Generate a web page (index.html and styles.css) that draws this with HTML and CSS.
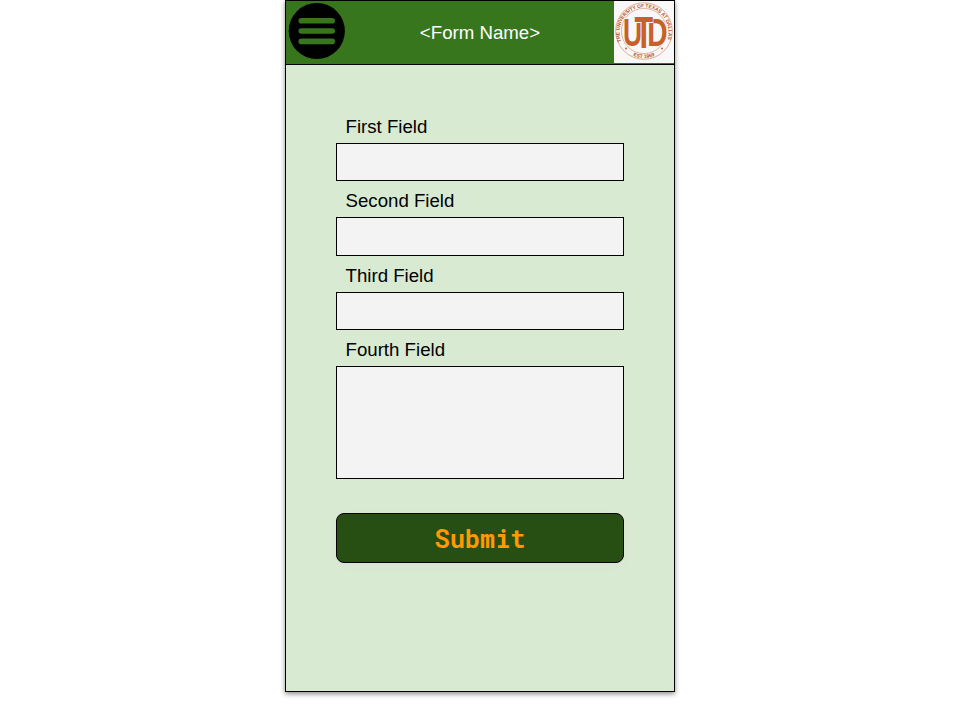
FILE: index.html
```html
<!DOCTYPE html>
<html lang="en">
<head>
<meta charset="utf-8">
<title>Form</title>
<link rel="stylesheet" href="styles.css">
</head>
<body>
<main class="phone">
  <header class="bar">
    <button class="menu" type="button" aria-label="Menu">
      <svg width="58" height="58" viewBox="0 0 58 58">
        <circle cx="28.8" cy="29" r="28.1" fill="#000"/>
        <g fill="#38761d">
          <rect x="10.5" y="16" width="36.5" height="5.6" rx="2.8"/>
          <rect x="10.5" y="26.2" width="36.5" height="5.6" rx="2.8"/>
          <rect x="10.5" y="36.6" width="36.5" height="5.6" rx="2.8"/>
        </g>
      </svg>
    </button>
    <h1 class="title">&lt;Form Name&gt;</h1>
    <svg class="logo" width="60" height="63" viewBox="0 0 60 63">
      <defs>
        <path id="ring-top" d="M7.4 40.3A24.5 24.5 0 1 1 52.6 40.3"/>
        <path id="ring-bottom" d="M11 49.2A26.8 26.8 0 0 0 49 49.2"/>
      </defs>
      <rect width="60" height="62" fill="#f8f8f8"/>
      <g fill="none" stroke="#c8652f">
        <circle cx="30" cy="30" r="28.3" stroke-width="1" stroke-opacity=".5"/>
        <circle cx="30" cy="30" r="22.6" stroke-width=".9" stroke-opacity=".5"/>
      </g>
      <g class="ring-text">
        <text textLength="94" lengthAdjust="spacingAndGlyphs"><textPath href="#ring-top">THE UNIVERSITY OF TEXAS AT DALLAS</textPath></text>
        <text text-anchor="middle"><textPath href="#ring-bottom" startOffset="50%">EST 1969</textPath></text>
      </g>
      <g fill="#c8652f"><circle cx="12" cy="47.5" r="1"/><circle cx="48" cy="47.5" r="1"/></g>
      <g class="monogram">
        <text transform="translate(9 44.5) scale(.68 1)">U</text>
        <text transform="translate(33.2 44.5) scale(.72 1)">D</text>
        <text transform="translate(20.5 46.5) scale(.78 1.15)">T</text>
      </g>
    </svg>
  </header>
  <form class="form">
    <label class="label first" for="f1">First Field</label>
    <input class="field" id="f1" type="text">
    <label class="label" for="f2">Second Field</label>
    <input class="field second" id="f2" type="text">
    <label class="label" for="f3">Third Field</label>
    <input class="field" id="f3" type="text">
    <label class="label" for="f4">Fourth Field</label>
    <textarea class="field area" id="f4"></textarea>
    <button class="submit" type="button">Submit</button>
  </form>
</main>
</body>
</html>
```
FILE: styles.css
```css
* { box-sizing: border-box; }
body {
  min-height: 720px;
  margin: 0;
  background: #fff;
  color: #000;
  font-family: "Liberation Sans", Arial, sans-serif;
}
.phone {
  width: 390px;
  height: 692px;
  margin-left: 285px;
  border: 1px solid #000;
  background: #d9ead3;
  box-shadow: 0 2px 5px rgba(0, 0, 0, .45);
}
.bar {
  display: grid;
  grid-template-columns: 60px 1fr 60px;
  height: 64px;
  border-bottom: 1px solid #000;
  background: #38761d;
}
.menu {
  display: block;
  width: 58px;
  height: 58px;
  margin: 1px 0 0 2px;
  padding: 0;
  border: 0;
  background: none;
}
.menu svg, .logo { display: block; }
.title {
  margin: 0;
  padding-top: 1px;
  color: #fff;
  font-size: 18.67px;
  font-weight: 400;
  line-height: 62px;
  text-align: center;
}
.ring-text {
  fill: #b9541f;
  font: bold 5px "Liberation Sans", sans-serif;
}
.monogram {
  fill: #c8602a;
  stroke: #f8f8f8;
  stroke-width: 1.6px;
  paint-order: stroke;
  font: bold 39px "Liberation Sans", sans-serif;
}
.form {
  display: flex;
  flex-direction: column;
  padding: 46px 50px 0;
}
.label {
  height: 36px;
  padding: 3px 0 0 9.5px;
  font-size: 18.67px;
  line-height: 33px;
}
.first { height: 32px; padding-top: 0; line-height: 31px; }
.field {
  width: 288px;
  height: 38px;
  margin: 0;
  padding: 6px 9px;
  border: 1px solid #000;
  border-radius: 0;
  background: #f3f3f3;
  font: inherit;
  resize: none;
}
.second { height: 39px; }
.area { height: 113px; }
.submit {
  width: 288px;
  height: 50px;
  margin-top: 34px;
  padding: 0 0 1px;
  border: 1px solid #000;
  border-radius: 8px;
  background: #274e13;
  box-shadow: 0 3px 6px rgba(220, 220, 220, .6);
  color: #ff9900;
  font: bold 25.3px "Roboto Mono", "DejaVu Sans Mono", monospace;
}
```
